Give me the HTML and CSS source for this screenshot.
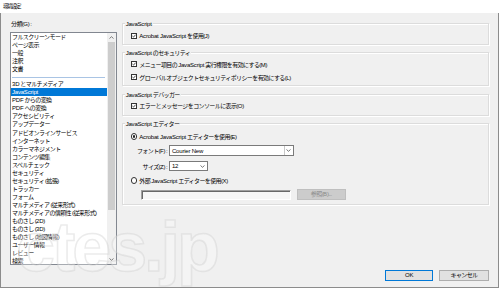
FILE: index.html
```html
<!DOCTYPE html>
<html lang="ja">
<head>
<meta charset="utf-8">
<link rel="stylesheet" href="styles.css">
</head>
<body>
<div class="titlebar">環境設定</div>
<div class="window">
  <div class="main">
    <div class="sidebar">
      <div class="sidebar-label">分類(<span class="lt">G</span>) :</div>
      <div class="listbox">
        <ul class="items">
          <li>フルスクリーンモード</li>
          <li>ページ表示</li>
          <li>一般</li>
          <li>注釈</li>
          <li>文書</li>
          <li class="sep"></li>
          <li><span class="lt">3D</span> とマルチメディア</li>
          <li class="selected"><span class="lt">JavaScript</span></li>
          <li><span class="lt">PDF</span> からの変換</li>
          <li><span class="lt">PDF</span> への変換</li>
          <li>アクセシビリティ</li>
          <li>アップデーター</li>
          <li>アドビオンラインサービス</li>
          <li>インターネット</li>
          <li>カラーマネジメント</li>
          <li>コンテンツ編集</li>
          <li>スペルチェック</li>
          <li>セキュリティ</li>
          <li>セキュリティ (拡張)</li>
          <li>トラッカー</li>
          <li>フォーム</li>
          <li>マルチメディア (従来形式)</li>
          <li>マルチメディアの信頼性 (従来形式)</li>
          <li>ものさし (<span class="lt">2D</span>)</li>
          <li>ものさし (<span class="lt">3D</span>)</li>
          <li>ものさし (地図情報)</li>
          <li>ユーザー情報</li>
          <li>レビュー</li>
          <li>検索</li>
        </ul>
        <div class="scrollbar">
          <div class="arrow"><svg width="5" height="3" viewBox="0 0 5 3"><path d="M0.5 2.5 L2.5 0.7 L4.5 2.5" fill="none" stroke="#606060" stroke-width="0.8"/></svg></div>
          <div class="track"><div class="thumb"></div></div>
          <div class="arrow"><svg width="5" height="3" viewBox="0 0 5 3"><path d="M0.5 0.5 L2.5 2.3 L4.5 0.5" fill="none" stroke="#606060" stroke-width="0.8"/></svg></div>
        </div>
      </div>
    </div>

    <div class="panel">
      <div class="group g1">
        <div class="group-title"><span class="lt">JavaScript</span></div>
        <div class="row">
          <span class="cb"><svg width="4" height="4" viewBox="0 0 4 4"><path d="M0.4 2 L1.5 3.1 L3.6 0.7" fill="none" stroke="#222" stroke-width="0.8"/></svg></span>
          <span><span class="lt">Acrobat JavaScript</span> を使用(<span class="lt">J</span>)</span>
        </div>
      </div>

      <div class="group g2">
        <div class="group-title"><span class="lt">JavaScript</span> のセキュリティ</div>
        <div class="row">
          <span class="cb"><svg width="4" height="4" viewBox="0 0 4 4"><path d="M0.4 2 L1.5 3.1 L3.6 0.7" fill="none" stroke="#222" stroke-width="0.8"/></svg></span>
          <span>メニュー項目の <span class="lt">JavaScript</span> 実行権限を有効にする(<span class="lt">M</span>)</span>
        </div>
        <div class="row">
          <span class="cb"><svg width="4" height="4" viewBox="0 0 4 4"><path d="M0.4 2 L1.5 3.1 L3.6 0.7" fill="none" stroke="#222" stroke-width="0.8"/></svg></span>
          <span>グローバルオブジェクトセキュリティポリシーを有効にする(<span class="lt">L</span>)</span>
        </div>
      </div>

      <div class="group g3">
        <div class="group-title"><span class="lt">JavaScript</span> デバッガー</div>
        <div class="row">
          <span class="cb"><svg width="4" height="4" viewBox="0 0 4 4"><path d="M0.4 2 L1.5 3.1 L3.6 0.7" fill="none" stroke="#222" stroke-width="0.8"/></svg></span>
          <span>エラーとメッセージをコンソールに表示(<span class="lt">O</span>)</span>
        </div>
      </div>

      <div class="group g4">
        <div class="group-title"><span class="lt">JavaScript</span> エディター</div>
        <div class="row">
          <span class="rb on"></span>
          <span><span class="lt">Acrobat JavaScript</span> エディターを使用(<span class="lt">E</span>)</span>
        </div>
        <div class="row row-field">
          <span class="field-label">フォント(<span class="lt">F</span>) :</span>
          <div class="select select-font">
            <span class="select-text lt">Courier New</span>
            <span class="select-arrow divided"><svg width="5" height="3" viewBox="0 0 5 3"><path d="M0.5 0.5 L2.5 2.3 L4.5 0.5" fill="none" stroke="#555" stroke-width="0.8"/></svg></span>
          </div>
        </div>
        <div class="row row-field">
          <span class="field-label">サイズ(<span class="lt">Z</span>) :</span>
          <div class="select select-size">
            <span class="select-text lt">12</span>
            <span class="select-arrow"><svg width="5" height="3" viewBox="0 0 5 3"><path d="M0.5 0.5 L2.5 2.3 L4.5 0.5" fill="none" stroke="#555" stroke-width="0.8"/></svg></span>
          </div>
        </div>
        <div class="row">
          <span class="rb"></span>
          <span>外部 <span class="lt">JavaScript</span> エディターを使用(<span class="lt">X</span>)</span>
        </div>
        <div class="row row-path">
          <div class="textfield"></div>
          <div class="btn-disabled">参照(<span class="lt">B</span>)...</div>
        </div>
      </div>
    </div>
  </div>

  <div class="footer">
    <div class="btn btn-default"><span class="lt">OK</span></div>
    <div class="btn btn-cancel">キャンセル</div>
  </div>
</div>
<div class="watermark">ctes.jp</div>
</body>
</html>
```

FILE: styles.css
```css
* { box-sizing: border-box; }
html, body { margin: 0; padding: 0; }
body {
  position: relative;
  width: 500px;
  height: 289px;
  overflow: hidden;
  background: #ffffff;
  color: #000;
  font-family: "Liberation Sans", "Noto Sans CJK JP", sans-serif;
  font-size: 6px;
  letter-spacing: -0.6px;
}
.lt { letter-spacing: -0.2px; }

.titlebar {
  height: 13px;
  line-height: 12px;
  padding-left: 3px;
  font-size: 5.5px;
  letter-spacing: -1.2px;
  background: #fff;
}

.window {
  width: 499px;
  height: 275px;
  background: #f0f0f0;
  border: 1px solid #8c8c8c;
  border-top: 0;
}

.main {
  display: flex;
  gap: 4.7px;
  padding: 0 8.7px 0 9px;
}

/* sidebar */
.sidebar { width: 107px; padding-top: 7.3px; }
.sidebar-label { height: 8px; line-height: 8px; padding-left: 1px; }
.listbox {
  margin-top: 3.7px;
  height: 233px;
  border: 1px solid #828790;
  background: #fff;
  display: flex;
  overflow: hidden;
}
.items { flex: 1; list-style: none; margin: 0; padding: 0; min-width: 0; }
.items li {
  height: 8.05px;
  line-height: 8.05px;
  padding-left: 1px;
  white-space: nowrap;
}
.items li.sep { height: 7px; padding-top: 4px; }
.items li.sep::before {
  content: "";
  display: block;
  height: 1px;
  margin-right: 2px;
  background: #a9c4e4;
}
.items li.selected { background: #0078d7; color: #fff; }

.scrollbar {
  width: 9px;
  background: #f0f0f0;
  display: flex;
  flex-direction: column;
}
.scrollbar .arrow {
  height: 9px;
  display: flex;
  align-items: center;
  justify-content: center;
}
.scrollbar .track { flex: 1; padding: 0 1px; }
.scrollbar .thumb { height: 168px; background: #cdcdcd; }

/* panel */
.panel {
  flex: 1;
  padding-top: 10px;
  display: flex;
  flex-direction: column;
  gap: 7.5px;
}
.group {
  border: 1px solid #dcdcdc;
  box-shadow: inset 1px 1px 0 #fff, 1px 1px 0 #fff;
  display: flex;
  flex-direction: column;
  align-items: flex-start;
  padding: 0 0 4px 8px;
}
.group-title {
  height: 8px;
  line-height: 8px;
  margin: -4px 0 3.5px -6px;
  padding: 0 1px;
  background: #f0f0f0;
}
.g1 { padding-bottom: 4.3px; }
.g1 .group-title { margin-bottom: 3.7px; }
.g2 { padding-bottom: 3.6px; }
.g2 .group-title { margin-bottom: 3px; }
.g3 { padding-bottom: 5px; }
.g3 .group-title { margin-bottom: 3.2px; }
.g4 { padding-bottom: 3.7px; }
.g4 .group-title { margin-bottom: 4.2px; }

.row {
  display: flex;
  align-items: center;
  height: 8px;
  white-space: nowrap;
}
.row + .row { margin-top: 5px; }

.cb {
  width: 6px;
  height: 6px;
  margin-right: 2.6px;
  border: 1px solid #333;
  background: #fff;
  display: flex;
  align-items: center;
  justify-content: center;
}
.rb {
  width: 6.5px;
  height: 6.5px;
  margin-right: 2.1px;
  border: 1px solid #333;
  border-radius: 50%;
  background: #fff;
  display: flex;
  align-items: center;
  justify-content: center;
}
.rb.on::after {
  content: "";
  width: 2.6px;
  height: 2.6px;
  border-radius: 50%;
  background: #222;
}

.row-field { height: 11px; }
.row-field + .row-field { height: 10px; }
.field-label {
  width: 36.3px;
  text-align: right;
  margin-right: 2.3px;
}
.select {
  height: 100%;
  border: 1px solid #7a7a7a;
  background: #fff;
  display: flex;
  align-items: center;
  padding-left: 1.7px;
}
.select-font { width: 124.4px; }
.select-size { width: 38.4px; }
.select-text { flex: 1; }
.select-arrow {
  width: 8.5px;
  height: 100%;
  display: flex;
  align-items: center;
  justify-content: center;
}
.select-arrow.divided { border-left: 1px solid #c8c8c8; }

.row-path { height: 11px; padding-left: 10px; }
.textfield {
  width: 150.3px;
  height: 10.7px;
  border: 1px solid;
  border-color: #a0a0a0 #fff #fff #a0a0a0;
  box-shadow: inset 1px 1px 0 #696969;
  background: #f7f7f7;
}
.btn-disabled {
  width: 49px;
  height: 11px;
  margin-left: 5.7px;
  background: #cccccc;
  border: 1px solid #bfbfbf;
  color: #8a8a8a;
  text-align: center;
  line-height: 9px;
}

/* footer */
.footer {
  display: flex;
  justify-content: flex-end;
  gap: 6px;
  padding: 5px 9.3px 0 0;
}
.btn {
  height: 10.7px;
  border: 1px solid #adadad;
  background: #e1e1e1;
  text-align: center;
  line-height: 8.7px;
}
.btn-default { width: 48.3px; border-color: #0078d7; }
.btn-cancel { width: 49.4px; }

.watermark {
  position: absolute;
  left: 16px;
  top: 212px;
  line-height: 1;
  font-family: "Liberation Sans", sans-serif;
  font-weight: bold;
  font-size: 70px;
  letter-spacing: -3px;
  color: rgba(255, 255, 255, 0.3);
  -webkit-text-stroke: 1.5px rgba(205, 205, 205, 0.4);
  pointer-events: none;
}
```
